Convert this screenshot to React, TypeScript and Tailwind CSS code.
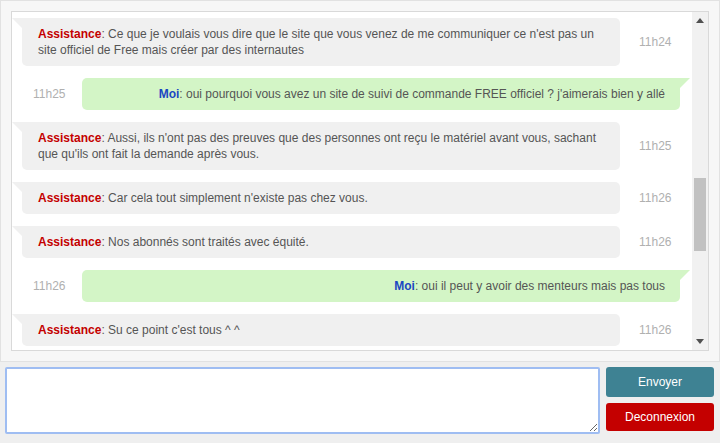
import React from "react";

type Msg = { from: "a" | "m"; text: string; time: string };

const msgs: Msg[] = [
  { from: "a", text: "Ce que je voulais vous dire que le site que vous venez de me communiquer ce n'est pas un site officiel de Free mais créer par des internautes", time: "11h24" },
  { from: "m", text: "oui pourquoi vous avez un site de suivi de commande FREE officiel ? j'aimerais bien y allé", time: "11h25" },
  { from: "a", text: "Aussi, ils n'ont pas des preuves que des personnes ont reçu le matériel avant vous, sachant que qu'ils ont fait la demande après vous.", time: "11h25" },
  { from: "a", text: "Car cela tout simplement n'existe pas chez vous.", time: "11h26" },
  { from: "a", text: "Nos abonnés sont traités avec équité.", time: "11h26" },
  { from: "m", text: "oui il peut y avoir des menteurs mais pas tous", time: "11h26" },
  { from: "a", text: "Su ce point c'est tous ^ ^", time: "11h26" },
];

function Assist({ m }: { m: Msg }) {
  return (
    <div className="flex items-center">
      <div className="relative ml-[10px] w-[598px] rounded-[5px] rounded-tl-none bg-[#f0f0f0] px-[16px] py-[8px] text-[#555]">
        <svg className="absolute left-[-10px] top-0" width="10" height="10" viewBox="0 0 10 10">
          <polygon points="0,0 10,0 10,10" fill="#f0f0f0" />
        </svg>
        <span className="font-bold text-[#c40000]">Assistance</span>: {m.text}
      </div>
      <div className="ml-[19px] text-[12px] text-[#b0b0b0]">{m.time}</div>
    </div>
  );
}

function Me({ m }: { m: Msg }) {
  return (
    <div className="flex items-center">
      <div className="w-[70px] pl-[21px] text-[12px] text-[#b0b0b0]">{m.time}</div>
      <div className="relative w-[598px] rounded-[5px] rounded-tr-none bg-[#d3f5c6] px-[15px] py-[8px] text-right text-[#555]">
        <svg className="absolute right-[-10px] top-0" width="10" height="10" viewBox="0 0 10 10">
          <polygon points="0,0 10,0 0,10" fill="#d3f5c6" />
        </svg>
        <span className="font-bold text-[#1a47c2]">Moi</span>: {m.text}
      </div>
    </div>
  );
}

export default function App() {
  return (
    <div
      className="flex h-[443px] w-[720px] flex-col bg-[#efefef] text-[12px] leading-[16px]"
      style={{ fontFamily: '"Liberation Sans", Arial, sans-serif' }}
    >
      <div className="border border-[#e2e2e2] bg-[#f7f7f7] p-[10px]">
        <div className="flex h-[340px] border border-[#d9d9d9] bg-white">
          <div className="flex flex-1 flex-col gap-[12px] overflow-hidden pt-[6px]">
            {msgs.map((m, i) => (m.from === "a" ? <Assist key={i} m={m} /> : <Me key={i} m={m} />))}
          </div>
          <div className="flex w-[16px] flex-col bg-[#f1f1f1]">
            <div className="flex h-[17px] items-center justify-center">
              <svg width="8" height="5" viewBox="0 0 8 5"><polygon points="0,5 8,5 4,0" fill="#505050" /></svg>
            </div>
            <div className="mx-[2px] mt-[149px] h-[73px] bg-[#c1c1c1]" />
            <div className="flex-1" />
            <div className="flex h-[17px] items-center justify-center">
              <svg width="8" height="5" viewBox="0 0 8 5"><polygon points="0,0 8,0 4,5" fill="#505050" /></svg>
            </div>
          </div>
        </div>
      </div>
      <div className="flex gap-[6px] px-[5px] pt-[5px]">
        <textarea className="h-[67px] w-[595px] resize rounded-[2px] border-2 border-[#9fbdf2] bg-white outline-none" />
        <div className="flex w-[108px] flex-col gap-[6px]">
          <button className="h-[30px] rounded-[3px] bg-[#3e8293] text-[12px] text-white">Envoyer</button>
          <button className="h-[28px] rounded-[3px] bg-[#c40000] text-[12px] text-white">Deconnexion</button>
        </div>
      </div>
    </div>
  );
}
